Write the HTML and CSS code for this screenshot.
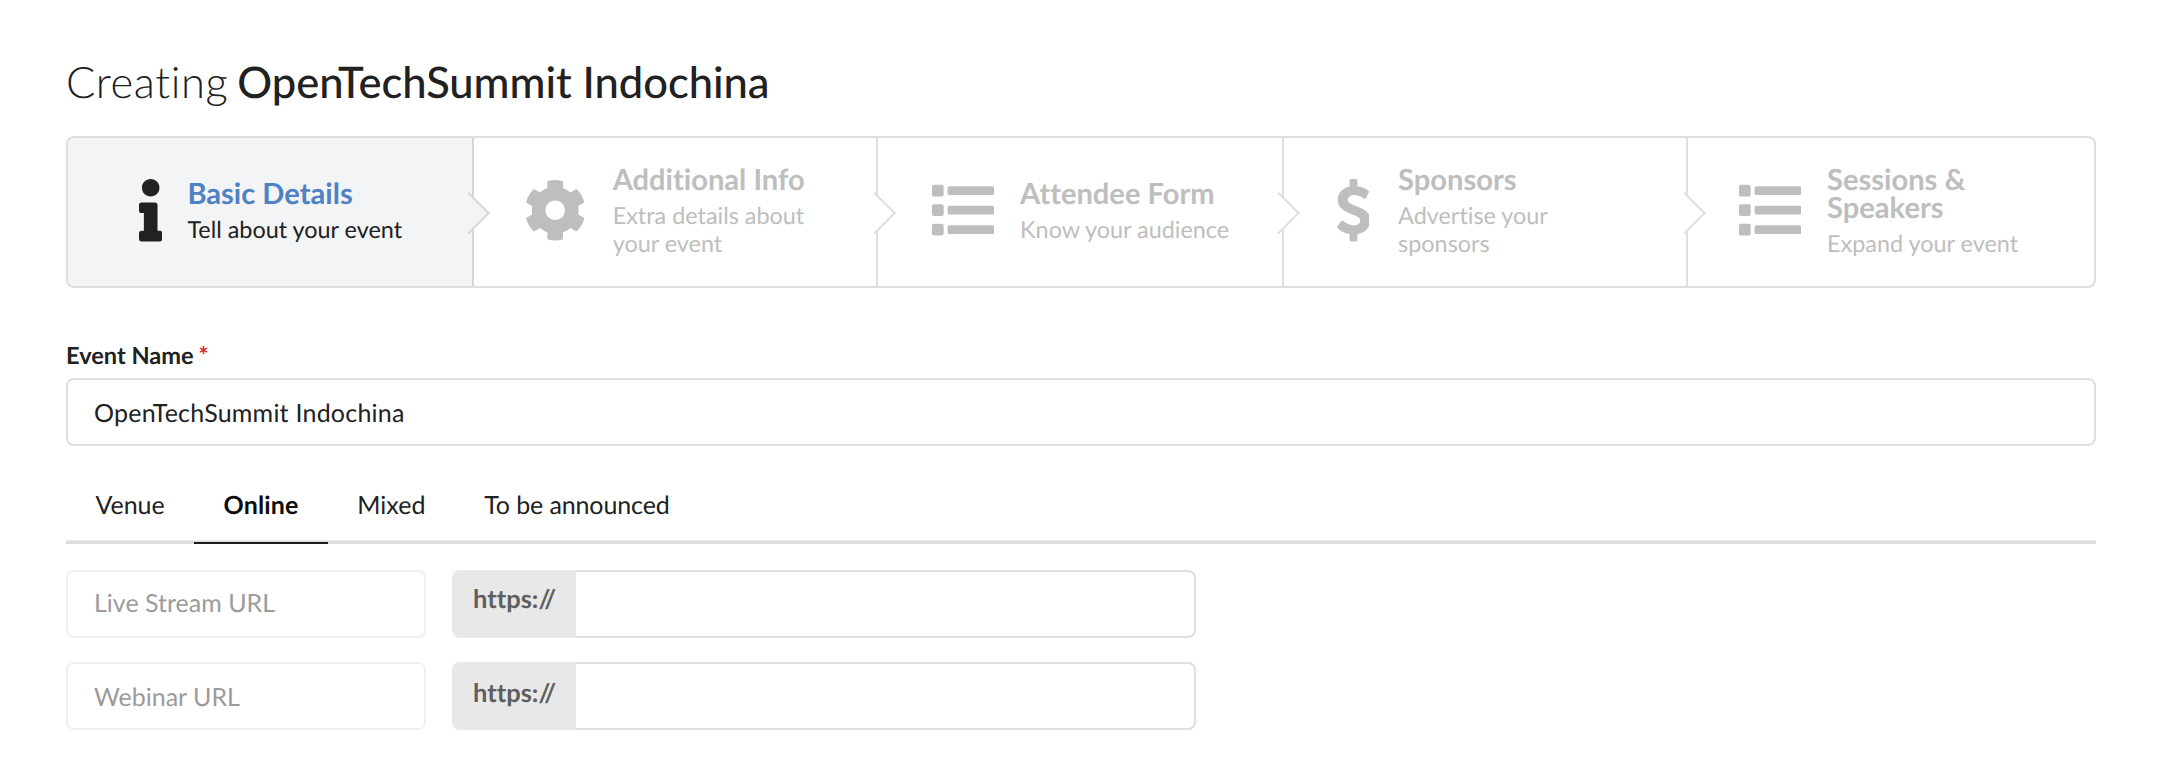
FILE: index.html
```html
<!DOCTYPE html>
<html lang="en">
<head>
<meta charset="utf-8">
<title>Create Event</title>
<link rel="stylesheet" href="styles.css">
</head>
<body>
<svg width="0" height="0" class="sprite" aria-hidden="true">
  <symbol id="list" viewBox="0 0 512 512">
    <rect x="0" y="48" width="96" height="96" rx="16"/><rect x="128" y="60" width="384" height="72" rx="16"/>
    <rect x="0" y="208" width="96" height="96" rx="16"/><rect x="128" y="220" width="384" height="72" rx="16"/>
    <rect x="0" y="368" width="96" height="96" rx="16"/><rect x="128" y="380" width="384" height="72" rx="16"/>
  </symbol>
</svg>
<main class="page">
  <h1 class="heading">Creating <strong>OpenTechSummit Indochina</strong></h1>

  <nav class="steps">
    <a class="step step-details active">
      <svg class="icon icon-info" viewBox="0 0 192 512"><path d="M20 424.229h20V279.771H20c-11.046 0-20-8.954-20-20V212c0-11.046 8.954-20 20-20h112c11.046 0 20 8.954 20 20v212.229h20c11.046 0 20 8.954 20 20V492c0 11.046-8.954 20-20 20H20c-11.046 0-20-8.954-20-20v-47.771c0-11.046 8.954-20 20-20zM96 0C56.235 0 24 32.235 24 72s32.235 72 72 72 72-32.235 72-72S135.764 0 96 0z"/></svg>
      <div class="content"><div class="title">Basic Details</div><div class="description">Tell about your event</div></div>
    </a>
    <a class="step step-info">
      <svg class="icon" viewBox="0 0 512 512"><path d="M487.4 315.7l-42.6-24.6c4.3-23.2 4.3-47 0-70.2l42.6-24.6c4.9-2.8 7.1-8.6 5.5-14-11.1-35.6-30-67.8-54.7-94.6-3.8-4.1-10-5.1-14.8-2.3L380.8 110c-17.9-15.4-38.5-27.3-60.8-35.1V25.8c0-5.6-3.9-10.5-9.4-11.7-36.7-8.2-74.3-7.8-109.2 0-5.5 1.2-9.4 6.1-9.4 11.7V75c-22.2 7.9-42.8 19.8-60.8 35.1L88.7 85.5c-4.9-2.8-11-1.9-14.8 2.3-24.7 26.7-43.6 58.9-54.7 94.6-1.7 5.4.6 11.2 5.5 14L67.3 221c-4.3 23.2-4.3 47 0 70.2l-42.6 24.6c-4.9 2.8-7.1 8.6-5.5 14 11.1 35.6 30 67.8 54.7 94.6 3.8 4.1 10 5.1 14.8 2.3l42.6-24.6c17.9 15.4 38.5 27.3 60.8 35.1v49.2c0 5.6 3.9 10.5 9.4 11.7 36.7 8.2 74.3 7.8 109.2 0 5.5-1.2 9.4-6.1 9.4-11.7v-49.2c22.2-7.9 42.8-19.8 60.8-35.1l42.6 24.6c4.9 2.8 11 1.9 14.8-2.3 24.7-26.7 43.6-58.9 54.7-94.6 1.5-5.5-.7-11.3-5.6-14.1zM256 336c-44.1 0-80-35.9-80-80s35.9-80 80-80 80 35.9 80 80-35.9 80-80 80z"/></svg>
      <div class="content"><div class="title">Additional Info</div><div class="description">Extra details about<br>your event</div></div>
    </a>
    <a class="step step-form">
      <svg class="icon"><use href="#list"/></svg>
      <div class="content"><div class="title">Attendee Form</div><div class="description">Know your audience</div></div>
    </a>
    <a class="step step-sponsors">
      <svg class="icon icon-dollar" viewBox="0 0 288 512"><path d="M113.411 169.375c0-23.337 21.536-38.417 54.865-38.417 26.726 0 54.116 12.263 76.461 28.333 5.88 4.229 14.13 2.354 17.575-4.017l23.552-43.549c2.649-4.898 1.596-10.991-2.575-14.68-24.281-21.477-59.135-34.09-91.289-37.806V12c0-6.627-5.373-12-12-12h-40c-6.627 0-12 5.373-12 12v49.832c-58.627 13.29-97.299 55.917-97.299 108.639 0 123.533 184.765 110.81 184.765 169.414 0 19.823-16.311 41.158-52.124 41.158-30.751 0-62.932-15.88-87.848-35.887-5.31-4.264-13.082-3.315-17.159 2.14l-30.389 40.667c-3.627 4.854-3.075 11.657 1.302 15.847 24.049 23.02 59.249 41.255 98.751 47.973V500c0 6.627 5.373 12 12 12h40c6.627 0 12-5.373 12-12v-47.438c65.72-10.215 106.176-59.186 106.176-116.516.001-119.688-184.766-103.707-184.766-166.671z"/></svg>
      <div class="content"><div class="title">Sponsors</div><div class="description">Advertise your<br>sponsors</div></div>
    </a>
    <a class="step step-sessions">
      <svg class="icon"><use href="#list"/></svg>
      <div class="content"><div class="title">Sessions &amp;<br>Speakers</div><div class="description">Expand your event</div></div>
    </a>
  </nav>

  <label class="label">Event Name <span class="required">*</span></label>
  <div class="input">OpenTechSummit Indochina</div>

  <nav class="tabs">
    <a class="tab">Venue</a>
    <a class="tab current">Online</a>
    <a class="tab">Mixed</a>
    <a class="tab">To be announced</a>
  </nav>

  <div class="row">
    <div class="input disabled">Live Stream URL</div>
    <div class="url"><span class="prefix">https://</span><span class="url-value"></span></div>
  </div>
  <div class="row row-lower">
    <div class="input disabled">Webinar URL</div>
    <div class="url"><span class="prefix">https://</span><span class="url-value"></span></div>
  </div>
</main>
</body>
</html>
```
FILE: styles.css
```css
* { box-sizing: border-box; }
body {
  margin: 0;
  background: #fff;
  color: #212121;
  font-family: Lato, "Liberation Sans", sans-serif;
  font-size: 25px;
  font-variant-ligatures: none;
  text-rendering: geometricPrecision;
}
.sprite { position: absolute; }
.page { padding: 56px 64px 0 66px; height: 758px; overflow: hidden; }

.heading {
  margin: 0 0 28px;
  font-size: 43.5px;
  line-height: 52px;
  font-weight: 300;
  letter-spacing: .6px;
  word-spacing: -3.5px;
}
.heading strong { font-weight: 500; letter-spacing: -.05px; word-spacing: 0; }

.steps {
  display: grid;
  grid-template-columns: 406px 404px 406px 404px 1fr;
  height: 152px;
  border: 2px solid #dededf;
  border-radius: 8px;
}
.step {
  position: relative;
  display: flex;
  align-items: center;
  gap: 26px;
  padding-bottom: 3px;
  border-right: 2px solid #dededf;
  color: #bebebe;
}
.step:last-child { border-right: 0; }
.step::after {
  content: "";
  position: absolute;
  z-index: 1;
  top: 60px;
  right: -11.5px;
  width: 27.5px;
  height: 27.5px;
  background: #fff;
  border: solid #dededf;
  border-width: 2px 2px 0 0;
  transform: rotate(45deg);
}
.step:nth-child(even)::after { right: -13px; }
.step:last-child::after { display: none; }
.step.active { background: #f3f4f5; border-radius: 6px 0 0 6px; color: #212121; border-color: #d6d6d7; }
.step.active::after { background: #f3f4f5; border-color: #d6d6d7; }
.step.active .title { color: #4f82c3; }
.step-details { padding-left: 71px; gap: 25px; }
.step-info { padding-left: 50.3px; }
.step-form { padding-left: 53.7px; }
.step-sponsors { padding-left: 50px; gap: 29px; }
.step-sessions { padding-left: 50.7px; }
.icon { flex: none; width: 62.4px; height: 62.4px; fill: currentColor; }
.icon-info { width: 23.4px; }
.icon-dollar { width: 35.1px; }
.content { padding-top: 2px; }
.title { font-size: 29.1px; line-height: 28px; font-weight: 700; margin-bottom: 7px; }
.description { font-size: 23.4px; line-height: 28px; }

.label { display: block; margin: 54px 0 8px; font-size: 23.6px; line-height: 28px; font-weight: 700; }
.required { color: #db2828; margin-left: -1px; }
.input {
  height: 68px;
  padding: 0 26px;
  border: 2px solid #dededf;
  border-radius: 8px;
  line-height: 66px;
  letter-spacing: .22px;
}

.tabs {
  display: flex;
  height: 74px;
  margin: 24px 0 26px;
  border-bottom: 3px solid #dededf;
  box-shadow: inset 0 -1px #e9e9ea;
}
.tab { height: 74px; padding: 22px 29.4px 0; line-height: 26px; }
.tab.current { font-weight: 700; color: #0d0d0d; border-bottom: 2px solid #1b1c1d; letter-spacing: .15px; }
.tab:last-child { letter-spacing: -.12px; }

.row { display: flex; gap: 26px; margin-bottom: 24px; }
.input.disabled { width: 360px; border-color: #f0f0f0; color: #9b9b9b; line-height: 62px; letter-spacing: 0; }
.url { display: flex; width: 744px; height: 68px; }
.prefix {
  width: 124px;
  padding-left: 21px;
  background: #e8e8e8;
  border-radius: 8px 0 0 8px;
  color: #5f5f5f;
  font-size: 25.5px;
  font-weight: 700;
  line-height: 59px;
}
.url-value { flex: 1; border: 2px solid #dededf; border-left: 0; border-radius: 0 8px 8px 0; }
.row-lower .input { line-height: 66px; }
.row-lower .prefix { line-height: 63px; }
```
